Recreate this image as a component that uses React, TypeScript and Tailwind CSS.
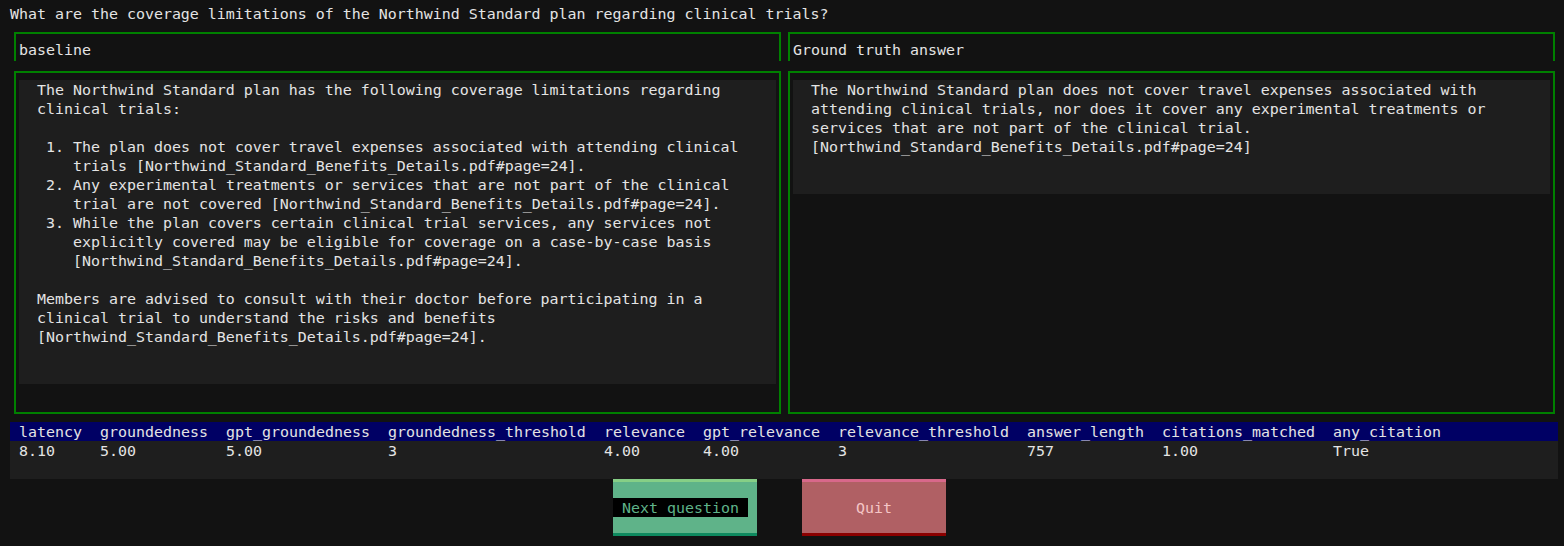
import React from 'react';

const mono = "font-['DejaVu_Sans_Mono','Liberation_Mono',monospace]";

const columns = [
  { name: 'latency', value: '8.10' },
  { name: 'groundedness', value: '5.00' },
  { name: 'gpt_groundedness', value: '5.00' },
  { name: 'groundedness_threshold', value: '3' },
  { name: 'relevance', value: '4.00' },
  { name: 'gpt_relevance', value: '4.00' },
  { name: 'relevance_threshold', value: '3' },
  { name: 'answer_length', value: '757' },
  { name: 'citations_matched', value: '1.00' },
  { name: 'any_citation', value: 'True' },
];

const cite = '[Northwind_Standard_Benefits_Details.pdf#page=24]';

const listItems = [
  `The plan does not cover travel expenses associated with attending clinical\ntrials ${cite}.`,
  `Any experimental treatments or services that are not part of the clinical\ntrial are not covered ${cite}.`,
  `While the plan covers certain clinical trial services, any services not\nexplicitly covered may be eligible for coverage on a case-by-case basis\n${cite}.`,
];

const Label: React.FC<{ text: string }> = ({ text }) => (
  <div className="h-[29px] border-t-2 border-x-2 border-[#008000] pt-[7px] pl-[3px] leading-[19px]">
    {text}
  </div>
);

const AnswerBox: React.FC<{ children: React.ReactNode }> = ({ children }) => (
  <div className="mt-[10px] h-[343px] border-2 border-[#008000] pt-[7px] px-[3px]">
    <div className="bg-[#1e1e1e] pl-[18px] pt-[1px] pb-[37px] leading-[19px]">{children}</div>
  </div>
);

export default function App() {
  return (
    <div className={`w-[1564px] h-[546px] bg-[#121212] text-[#e4e4e4] text-[14.95px] ${mono} flex flex-col overflow-hidden`}>
      {/* Question */}
      <div className="pl-[10px] pt-[5px] h-[32px] leading-[19px]">
        What are the coverage limitations of the Northwind Standard plan regarding clinical trials?
      </div>

      {/* Two answer columns */}
      <div className="flex gap-[7px] pl-[14px]">
        <div className="w-[767px] flex flex-col">
          <Label text="baseline" />
          <AnswerBox>
            <div className="whitespace-pre">
              {'The Northwind Standard plan has the following coverage limitations regarding\nclinical trials:'}
            </div>
            <div className="h-[19px]" />
            {listItems.map((item, i) => (
              <div key={i} className="flex">
                <span className="w-[36px] pl-[9px] shrink-0">{i + 1}.</span>
                <span className="whitespace-pre">{item}</span>
              </div>
            ))}
            <div className="h-[19px]" />
            <div className="whitespace-pre">
              {`Members are advised to consult with their doctor before participating in a\nclinical trial to understand the risks and benefits\n${cite}.`}
            </div>
          </AnswerBox>
        </div>
        <div className="w-[767px] flex flex-col">
          <Label text="Ground truth answer" />
          <AnswerBox>
            <div className="whitespace-pre">
              {`The Northwind Standard plan does not cover travel expenses associated with\nattending clinical trials, nor does it cover any experimental treatments or\nservices that are not part of the clinical trial.\n${cite}`}
            </div>
          </AnswerBox>
        </div>
      </div>

      {/* Metrics table */}
      <div className="mt-[8px] ml-[10px] w-[1548px] h-[57px] bg-[#1e1e1e] leading-[18px]">
        <div className="flex bg-[#000064] pl-[9px] pt-[1px] h-[19px]">
          {columns.map((c) => (
            <div key={c.name} className="whitespace-pre shrink-0" style={{ width: (c.name.length + 2) * 9 }}>
              {c.name}
            </div>
          ))}
        </div>
        <div className="flex pl-[9px] pt-[1px] h-[19px]">
          {columns.map((c) => (
            <div key={c.name} className="whitespace-pre shrink-0" style={{ width: (c.name.length + 2) * 9 }}>
              {c.value}
            </div>
          ))}
        </div>
      </div>

      {/* Buttons */}
      <div className="flex justify-center gap-[45px] pr-[5px]">
        <button className="w-[144px] h-[57px] bg-[#5fb389] border-t-[3px] border-b-[3px] border-t-[#86cf86] border-b-[#0e8a5f] flex items-center">
          <span className="bg-black text-[#5fb389] px-[9px] pt-[1px] h-[19px] leading-[18px] whitespace-pre">Next question</span>
        </button>
        <button className="w-[144px] h-[57px] bg-[#b06064] border-t-[3px] border-b-[3px] border-t-[#d8688a] border-b-[#8b0000] flex items-center justify-center">
          <span className="text-[#f5c6c6] pt-[1px] leading-[19px]">Quit</span>
        </button>
      </div>
    </div>
  );
}
